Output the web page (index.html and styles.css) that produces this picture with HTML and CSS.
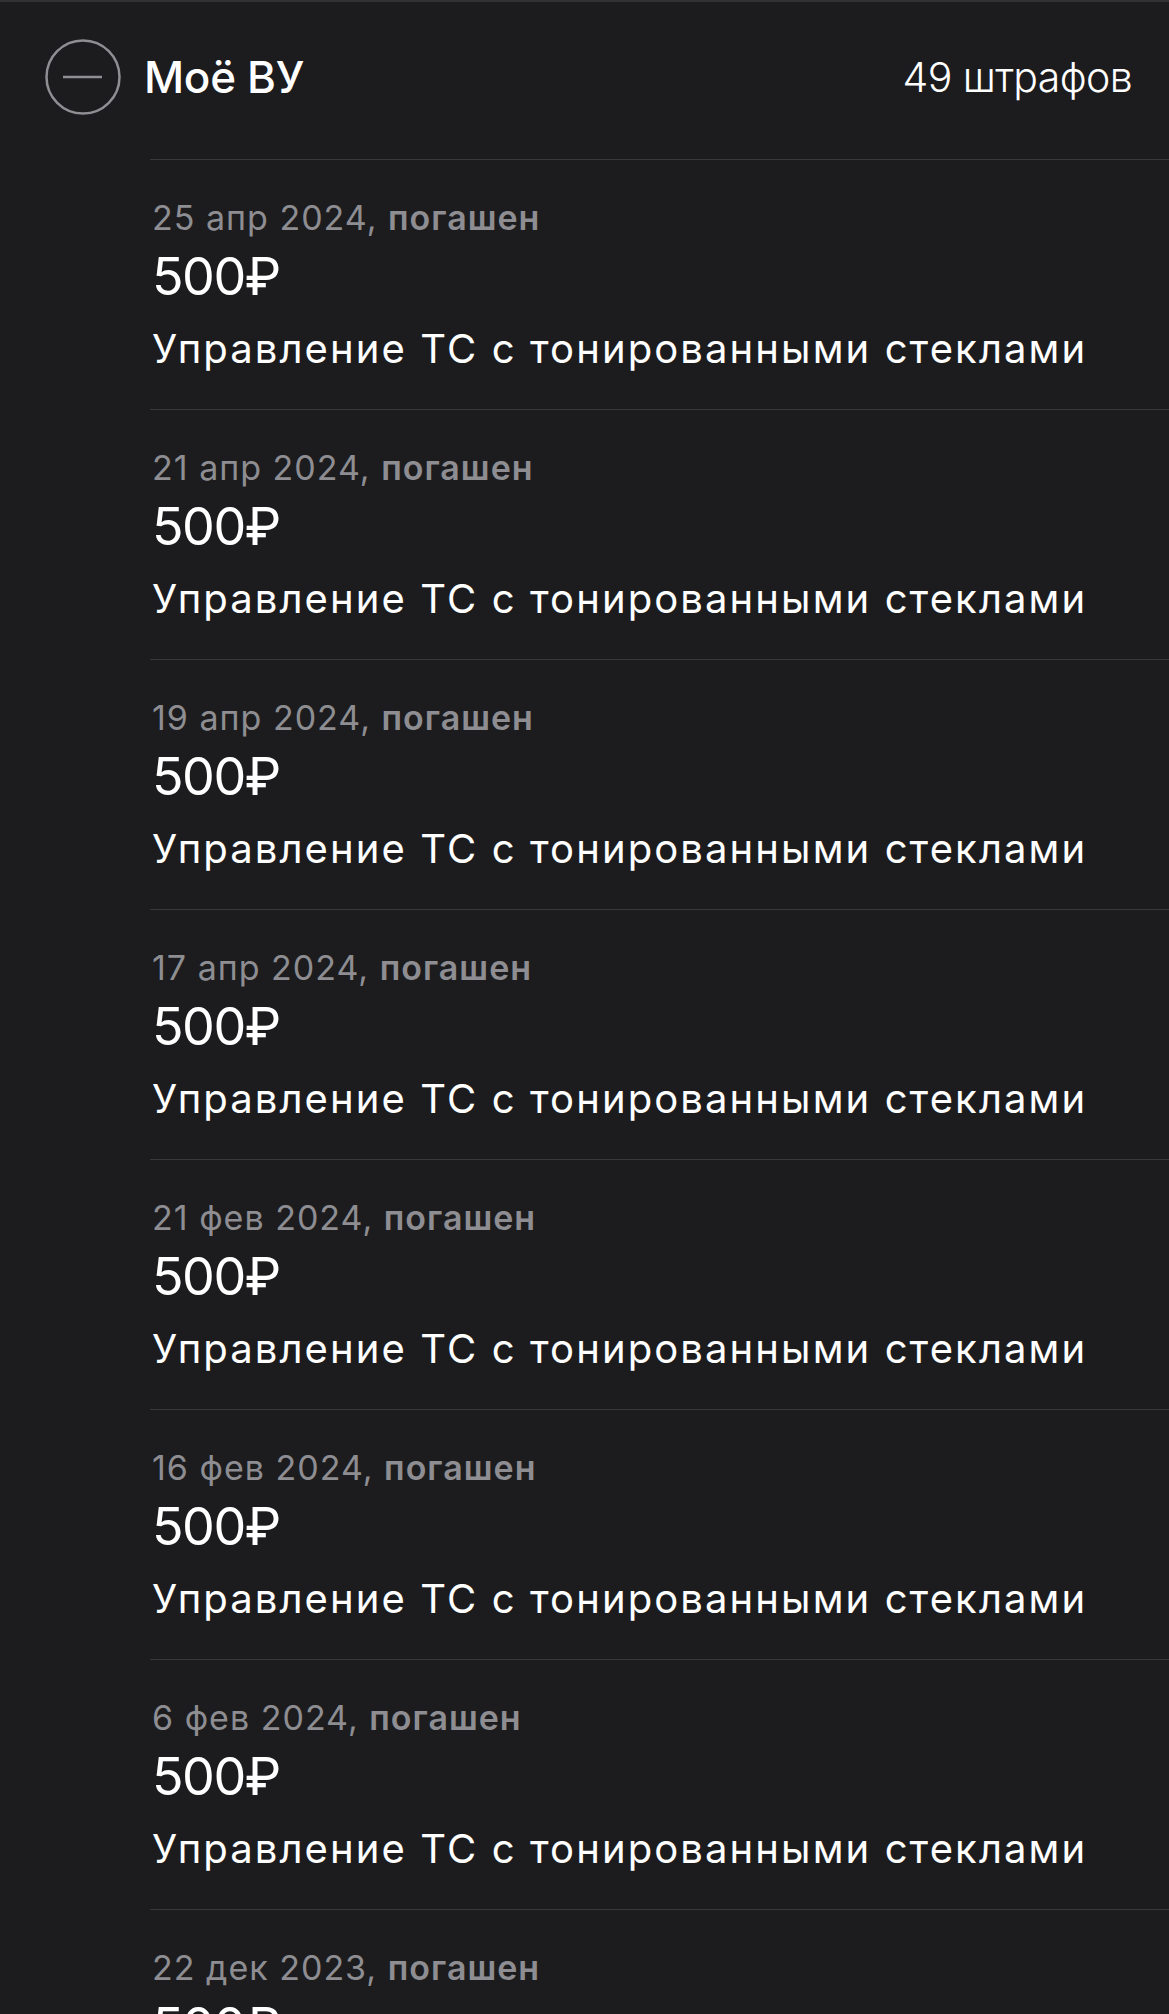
FILE: index.html
```html
<!DOCTYPE html>
<html lang="ru">
<head>
<meta charset="utf-8">
<title>Моё ВУ</title>
<link rel="stylesheet" href="styles.css">
</head>
<body>
<div class="screen">
  <header class="header">
    <div class="header-left">
      <svg class="collapse-icon" width="76" height="76" viewBox="0 0 76 76" aria-hidden="true">
        <circle cx="38" cy="38" r="36.5" fill="none" stroke="#8e8e93" stroke-width="2.5"/>
        <line x1="18" y1="38" x2="57" y2="38" stroke="#8e8e93" stroke-width="2.5"/>
      </svg>
      <h1 class="title">Моё ВУ</h1>
    </div>
    <div class="count">49 штрафов</div>
  </header>
  <ul class="fines">
    <li class="fine"><div class="fine-date">25 апр 2024, <span class="status">погашен</span></div><div class="fine-amount">500₽</div><div class="fine-desc">Управление ТС с тонированными стеклами</div></li>
    <li class="fine"><div class="fine-date">21 апр 2024, <span class="status">погашен</span></div><div class="fine-amount">500₽</div><div class="fine-desc">Управление ТС с тонированными стеклами</div></li>
    <li class="fine"><div class="fine-date">19 апр 2024, <span class="status">погашен</span></div><div class="fine-amount">500₽</div><div class="fine-desc">Управление ТС с тонированными стеклами</div></li>
    <li class="fine"><div class="fine-date">17 апр 2024, <span class="status">погашен</span></div><div class="fine-amount">500₽</div><div class="fine-desc">Управление ТС с тонированными стеклами</div></li>
    <li class="fine"><div class="fine-date">21 фев 2024, <span class="status">погашен</span></div><div class="fine-amount">500₽</div><div class="fine-desc">Управление ТС с тонированными стеклами</div></li>
    <li class="fine"><div class="fine-date">16 фев 2024, <span class="status">погашен</span></div><div class="fine-amount">500₽</div><div class="fine-desc">Управление ТС с тонированными стеклами</div></li>
    <li class="fine"><div class="fine-date">6 фев 2024, <span class="status">погашен</span></div><div class="fine-amount">500₽</div><div class="fine-desc">Управление ТС с тонированными стеклами</div></li>
    <li class="fine"><div class="fine-date">22 дек 2023, <span class="status">погашен</span></div><div class="fine-amount">500₽</div><div class="fine-desc">Управление ТС с тонированными стеклами</div></li>
  </ul>
</div>
</body>
</html>
```
FILE: styles.css
```css
html, body {
  margin: 0;
  padding: 0;
  background: #1c1c1e;
}
body {
  height: 2014px;
  overflow: hidden;
  font-family: Inter, "Noto Sans", "DejaVu Sans", sans-serif;
  color: #ffffff;
}
.screen {
  border-top: 2px solid #323234;
}
.header {
  box-sizing: border-box;
  height: 150px;
  display: flex;
  align-items: center;
  justify-content: space-between;
  padding: 0 37px 0 45px;
}
.header-left {
  display: flex;
  align-items: center;
  gap: 23px;
}
.collapse-icon {
  display: block;
}
.title {
  margin: 0;
  font-size: 44px;
  font-weight: 500;
  letter-spacing: -0.3px;
}
.count {
  font-size: 41px;
  font-weight: 300;
  letter-spacing: -0.6px;
}
.fines {
  list-style: none;
  margin: 7px 0 0 150px;
  padding: 0;
}
.fine {
  border-top: 1px solid #38383a;
  padding: 38px 0 36px 2px;
}
.fine-date {
  font-size: 34px;
  line-height: 40px;
  color: #8d8d92;
  letter-spacing: 1px;
}
.status {
  font-weight: 600;
}
.fine-amount {
  margin-top: 9px;
  font-size: 52px;
  line-height: 60px;
  letter-spacing: -1.5px;
}
.fine-desc {
  margin-top: 18px;
  font-size: 40px;
  line-height: 48px;
  letter-spacing: 2.1px;
  white-space: nowrap;
}
```
